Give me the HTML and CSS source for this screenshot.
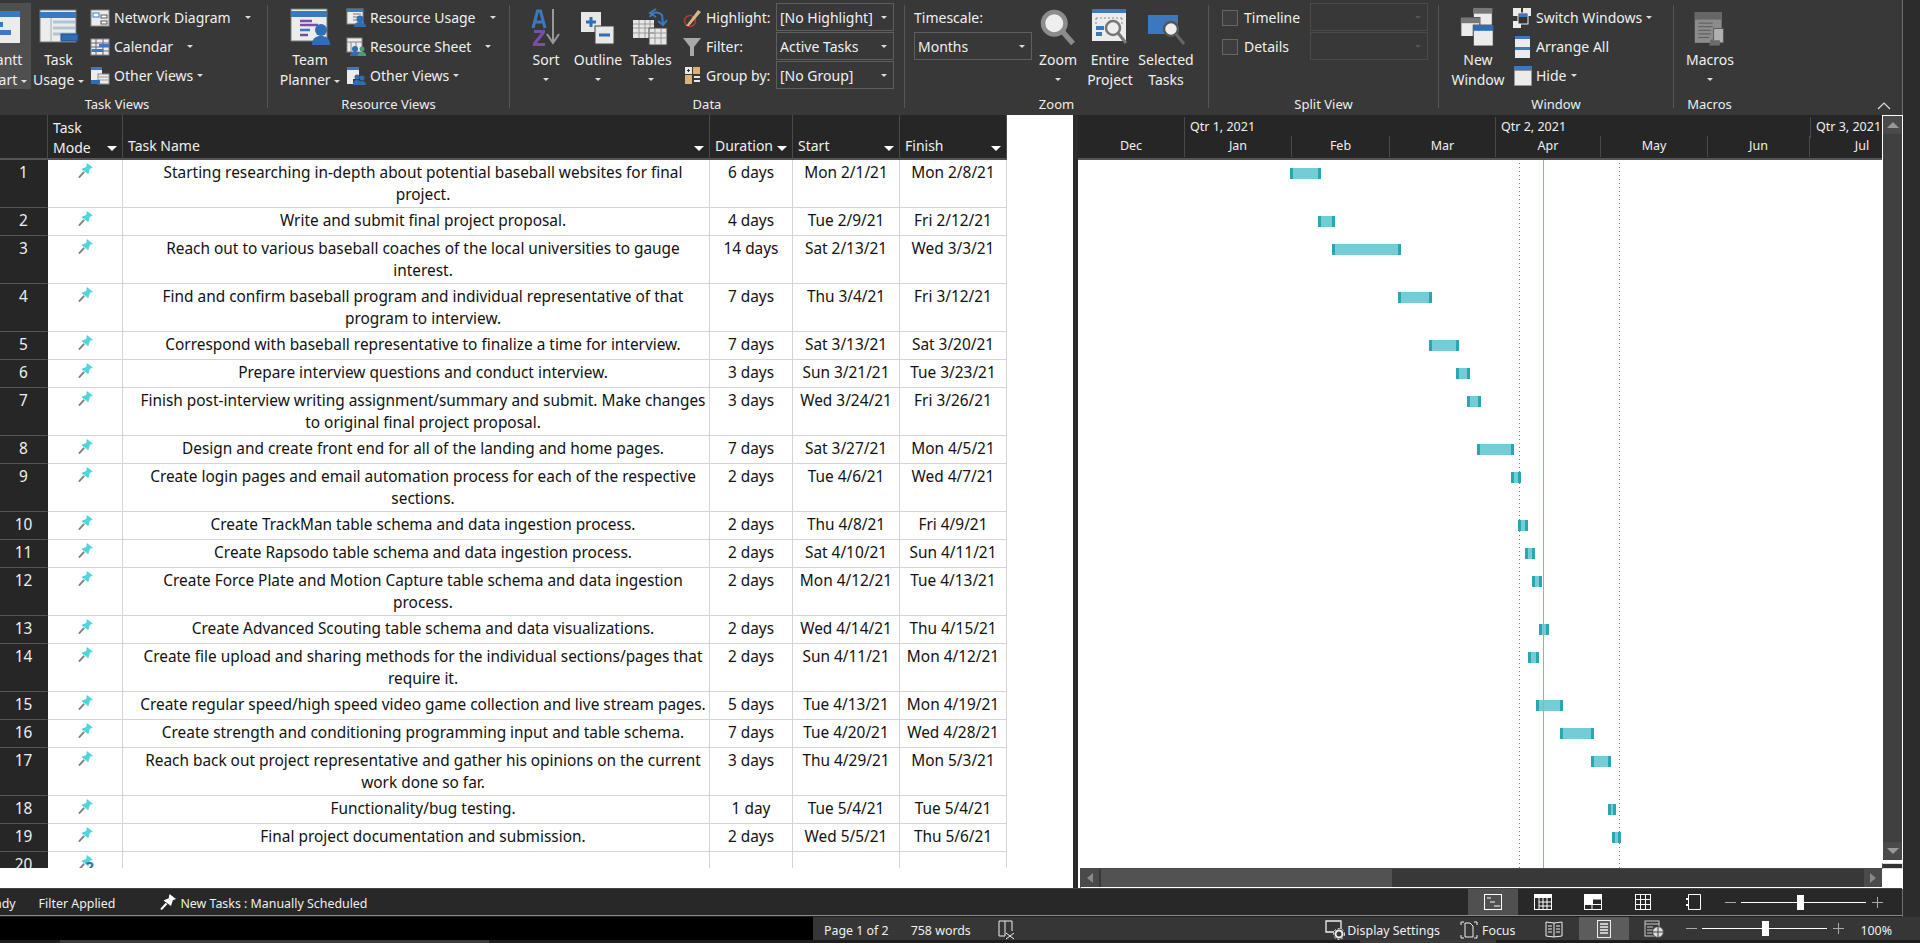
FILE: index.html
```html
<!DOCTYPE html>
<html lang="en">
<head>
<meta charset="utf-8">
<title>Project</title>
<link rel="stylesheet" href="styles.css">
</head>
<body>
<svg class="defs" width="0" height="0">
  <symbol id="pin" viewBox="0 0 16 16">
    <path d="M6.500 9.500 1 15.500" stroke="#7d7d7d" stroke-width="2" fill="none"/>
    <path d="M9.500 0l6.500 5-3.200 1.200-1.800 5.800-7.500-5.600 5.200-2.200z" fill="#4fd6dc"/>
  </symbol>
  <symbol id="pinw" viewBox="0 0 16 16">
    <path d="M6.500 9.500 1 15.500" stroke="#fff" stroke-width="2" fill="none"/>
    <path d="M9.500 0l6.500 5-3.200 1.200-1.800 5.800-7.500-5.600 5.200-2.200z" fill="#fff"/>
  </symbol>
  <symbol id="mag" viewBox="0 0 24 24">
    <circle cx="9.500" cy="9.500" r="7.500" fill="#eee" stroke="#8c8c8c" stroke-width="3"/>
    <path d="M15 15l7 8" stroke="#8c8c8c" stroke-width="3.500"/>
  </symbol>
</svg>
<div class="top">
<div class="project">
  <header class="ribbon">
    <section class="group g-task">
      <div class="body">
        <div class="big b-gantt active">
          <svg class="bigicon" width="32" height="34" viewBox="0 0 32 34"><rect x="0" y="1" width="32" height="32" fill="#ececec"/><rect y="1" width="32" height="6" fill="#3b78c2"/><rect x="3" y="12" width="12" height="5" fill="#3b78c2"/><rect x="11" y="20" width="12" height="5" fill="#3b78c2"/><path d="M1 9v22M9 9v22" stroke="#bbb"/></svg>
          <span class="lbl">Gantt</span><span class="lbl">Chart <i class="caret"></i></span>
        </div>
        <div class="big b-usage">
          <svg class="bigicon" width="40" height="36" viewBox="0 0 40 36"><rect x="1" y="1" width="36" height="32" fill="#ececec" stroke="#777"/><rect x="1" y="3" width="36" height="6" fill="#3b78c2"/><path d="M12 9v24" stroke="#aaa"/><path d="M14 13h22M14 19h22M14 25h22" stroke="#b4c4d2" stroke-width="3"/><rect x="22" y="25" width="17" height="7" fill="#2f6db5" stroke="#1e4d86"/></svg>
          <span class="lbl">Task</span><span class="lbl">Usage <i class="caret"></i></span>
        </div>
        <div class="smalls s-task">
          <div class="small"><svg width="20" height="18" viewBox="0 0 20 18"><rect x="1" y="1" width="18" height="16" fill="#ececec" stroke="#888"/><rect x="3" y="4" width="6" height="4" fill="#fff" stroke="#3b78c2"/><rect x="11" y="6" width="6" height="3" fill="#fff" stroke="#555"/><rect x="11" y="12" width="6" height="3" fill="#fff" stroke="#555"/></svg><span>Network Diagram</span><i class="caret c-far"></i></div>
          <div class="small"><svg width="20" height="18" viewBox="0 0 20 18"><rect x="1" y="1" width="18" height="16" fill="#ececec" stroke="#888"/><path d="M1 5h18M1 9h18M1 13h18M6 1v16M13 1v16" stroke="#666"/><rect x="9" y="6" width="10" height="3" fill="#3b78c2"/><rect x="2" y="11" width="11" height="3" fill="#3b78c2"/></svg><span>Calendar</span><i class="caret c-mid"></i></div>
          <div class="small"><svg width="20" height="20" viewBox="0 0 20 20"><rect x="1" y="1" width="11" height="13" fill="#ececec"/><rect x="1" y="1" width="11" height="3" fill="#3b78c2"/><rect x="8" y="8" width="11" height="10" fill="#ececec" stroke="#888"/><path d="M9 11h9M9 14h9" stroke="#999"/><rect x="1" y="14" width="9" height="4" fill="#2f6db5"/></svg><span>Other Views</span><i class="caret"></i></div>
        </div>
      </div>
      <div class="glabel">Task Views</div>
    </section>
    <div class="sep"></div>
    <section class="group g-res">
      <div class="body">
        <div class="big b-team">
          <svg class="bigicon" width="40" height="38" viewBox="0 0 40 38"><rect x="1" y="1" width="36" height="32" fill="#ececec" stroke="#777"/><rect x="1" y="3" width="36" height="6" fill="#3b78c2"/><path d="M10 13h12" stroke="#7a4ea8" stroke-width="2.500"/><path d="M10 17h18" stroke="#7a4ea8" stroke-width="2.500"/><path d="M10 22h10" stroke="#3b78c2" stroke-width="2.500"/><path d="M10 27h8" stroke="#7a4ea8" stroke-width="2.500"/><circle cx="31" cy="22" r="6" fill="#2f6db5"/><path d="M22 37c0-7 4-9 9-9s9 2 9 9z" fill="#2f6db5"/></svg>
          <span class="lbl">Team</span><span class="lbl">Planner <i class="caret"></i></span>
        </div>
        <div class="smalls s-res">
          <div class="small"><svg width="20" height="20" viewBox="0 0 20 20"><rect x="1" y="1" width="16" height="15" fill="#ececec" stroke="#888"/><rect x="1" y="1" width="16" height="3" fill="#3b78c2"/><path d="M7 6h8M7 9h6M7 12h5" stroke="#777"/><circle cx="14" cy="11" r="3.500" fill="#2f6db5"/><path d="M8 19c0-4 3-5 6-5s6 1 6 5z" fill="#2f6db5"/></svg><span>Resource Usage</span><i class="caret c-far2"></i></div>
          <div class="small"><svg width="20" height="20" viewBox="0 0 20 20"><rect x="1" y="1" width="15" height="14" fill="#ececec" stroke="#888"/><path d="M1 5h15M5 5v10M10 5v10" stroke="#888"/><circle cx="9" cy="12" r="3" fill="#2f6db5"/><path d="M4 19c0-3 2-4 5-4s5 1 5 4z" fill="#2f6db5"/><circle cx="16" cy="12" r="2.500" fill="#4f9a78"/><path d="M12 19c0-3 1-4 4-4s4 1 4 4z" fill="#4f9a78"/></svg><span>Resource Sheet</span><i class="caret c-mid2"></i></div>
          <div class="small"><svg width="20" height="20" viewBox="0 0 20 20"><rect x="1" y="1" width="12" height="12" fill="#ececec"/><rect x="1" y="1" width="12" height="3" fill="#3b78c2"/><rect x="1" y="13" width="6" height="5" fill="#ececec"/><circle cx="11" cy="11" r="2.500" fill="#2f6db5"/><path d="M7 19c0-3 1-5 4-5s4 2 4 5z" fill="#2f6db5"/><circle cx="16" cy="12" r="2.500" fill="#2f6db5"/><path d="M13 19c0-3 1-4 3-4s4 1 4 4z" fill="#2f6db5"/></svg><span>Other Views</span><i class="caret"></i></div>
        </div>
      </div>
      <div class="glabel">Resource Views</div>
    </section>
    <div class="sep"></div>
    <section class="group g-data">
      <div class="body">
        <div class="big b-sort">
          <svg class="bigicon" width="30" height="38" viewBox="0 0 30 38"><path d="M2 20 6.500 3h3L14 20M4 14h8" stroke="#3b78c2" stroke-width="3" fill="none"/><path d="M3 22h11v3L6 35h8v3H2v-3l8-10H3z" fill="#7a4ea8"/><path d="M22 1v32M16 26l6 9 6-9" stroke="#9a9a9a" stroke-width="2" fill="none"/></svg>
          <span class="lbl">Sort</span><i class="caret c-below"></i>
        </div>
        <div class="big b-outline">
          <svg class="bigicon" width="34" height="36" viewBox="0 0 34 36"><rect x="0" y="3" width="20" height="20" fill="#e8e8e8"/><path d="M5 13h10M10 8v10" stroke="#2f6db5" stroke-width="3"/><rect x="14" y="17" width="19" height="18" fill="#e8e8e8" stroke="#444"/><path d="M18 26h11" stroke="#2f6db5" stroke-width="3"/></svg>
          <span class="lbl">Outline</span><i class="caret c-below"></i>
        </div>
        <div class="big b-tables">
          <svg class="bigicon" width="38" height="38" viewBox="0 0 38 38"><rect x="1" y="12" width="21" height="18" fill="#e6e6e6"/><rect x="17" y="20" width="18" height="17" fill="#e6e6e6" stroke="#444"/><path d="M1 16h21M1 20h21M1 25h21M7 12v18M13 12v18M18 12v8M17 25h18M17 30h18M23 20v17M29 20v17" stroke="#888" stroke-width=".8"/><path d="M18 9c2-5 8-6 12-2l1 9M26 13l5 4 4-5M24 1l-6 4 6 4" stroke="#3b78c2" stroke-width="2" fill="none"/></svg>
          <span class="lbl">Tables</span><i class="caret c-below"></i>
        </div>
        <div class="smalls s-data">
          <div class="small"><svg width="20" height="20" viewBox="0 0 20 20"><circle cx="8" cy="13" r="5.500" fill="none" stroke="#b8392b" stroke-width="1.500"/><path d="M4 18 16 2l3 2L7 18z" fill="#d8b48c"/></svg><span>Highlight:</span></div>
          <div class="small"><svg width="20" height="20" viewBox="0 0 20 20"><path d="M1 1h18l-7 9v9h-4v-9z" fill="#a8a8a8"/></svg><span>Filter:</span></div>
          <div class="small"><svg width="20" height="20" viewBox="0 0 20 20"><rect x="3" y="1" width="7" height="7" fill="#e8e8e8"/><rect x="3" y="9" width="7" height="9" fill="#d8b278"/><rect x="11" y="1" width="7" height="7" fill="#d8b278"/><path d="M12 11h6M12 15h6" stroke="#e8e8e8" stroke-width="2"/><path d="M5 4.500h3M6.500 3v3" stroke="#333"/></svg><span>Group by:</span></div>
        </div>
        <div class="combos">
          <div class="combo"><span>[No Highlight]</span><i class="caret"></i></div>
          <div class="combo"><span>Active Tasks</span><i class="caret"></i></div>
          <div class="combo"><span>[No Group]</span><i class="caret"></i></div>
        </div>
      </div>
      <div class="glabel">Data</div>
    </section>
    <div class="sep"></div>
    <section class="group g-zoom">
      <div class="body">
        <div class="timescale">
          <div class="tlabel">Timescale:</div>
          <div class="combo"><span>Months</span><i class="caret"></i></div>
        </div>
        <div class="big b-zoom">
          <svg class="bigicon" width="36" height="36"><use href="#mag"/></svg>
          <span class="lbl">Zoom</span><i class="caret c-below"></i>
        </div>
        <div class="big b-entire">
          <svg class="bigicon" width="38" height="38" viewBox="0 0 38 38"><rect x="1" y="1" width="34" height="32" fill="#ececec"/><rect x="1" y="1" width="34" height="4" fill="#3b78c2"/><path d="M5 10v6M31 10v6M5 10h26" stroke="#888" stroke-dasharray="2 2"/><rect x="5" y="18" width="8" height="4" fill="#3b78c2"/><rect x="5" y="24" width="6" height="4" fill="#3b78c2"/><circle cx="22" cy="20" r="7" fill="#eee" stroke="#777" stroke-width="2.500"/><path d="M27 25l8 10" stroke="#777" stroke-width="3"/></svg>
          <span class="lbl">Entire</span><span class="lbl">Project</span>
        </div>
        <div class="big b-selected">
          <svg class="bigicon" width="40" height="38" viewBox="0 0 40 38"><rect x="2" y="7" width="30" height="19" fill="#3b78c2"/><circle cx="25" cy="21" r="7" fill="#eee" stroke="#555" stroke-width="2.500"/><path d="M30 26l8 10" stroke="#666" stroke-width="3"/></svg>
          <span class="lbl">Selected</span><span class="lbl">Tasks</span>
        </div>
      </div>
      <div class="glabel">Zoom</div>
    </section>
    <div class="sep"></div>
    <section class="group g-split">
      <div class="body">
        <div class="smalls s-split">
          <div class="small"><i class="check"></i><span>Timeline</span></div>
          <div class="small"><i class="check"></i><span>Details</span></div>
        </div>
        <div class="combos">
          <div class="combo dim"><span></span><i class="caret"></i></div>
          <div class="combo dim"><span></span><i class="caret"></i></div>
        </div>
      </div>
      <div class="glabel">Split View</div>
    </section>
    <div class="sep"></div>
    <section class="group g-window">
      <div class="body">
        <div class="big b-new">
          <svg class="bigicon" width="38" height="42" viewBox="0 0 38 42"><rect x="14" y="1" width="20" height="22" fill="#ececec" stroke="#333"/><rect x="14" y="1" width="20" height="6" fill="#777"/><rect x="1" y="11" width="20" height="20" fill="#ececec" stroke="#333"/><rect x="1" y="11" width="20" height="6" fill="#777"/><rect x="14" y="19" width="21" height="22" fill="#ececec" stroke="#333"/><rect x="14" y="19" width="21" height="6" fill="#2f6db5"/></svg>
          <span class="lbl">New</span><span class="lbl">Window</span>
        </div>
        <div class="smalls s-window">
          <div class="small"><svg width="20" height="22" viewBox="0 0 20 22"><rect x="1" y="1" width="8" height="8" fill="#ececec"/><rect x="11" y="1" width="8" height="8" fill="#ececec"/><rect x="1" y="14" width="8" height="7" fill="#ececec"/><rect x="6" y="6" width="10" height="11" fill="#333" stroke="#ececec"/><rect x="7" y="7" width="8" height="3" fill="#3b78c2"/></svg><span>Switch Windows</span><i class="caret"></i></div>
          <div class="small"><svg width="20" height="22" viewBox="0 0 20 22"><rect x="3" y="0" width="15" height="11" fill="#ececec"/><rect x="3" y="0" width="15" height="3" fill="#3b78c2"/><rect x="3" y="11" width="15" height="11" fill="#ececec"/><rect x="3" y="11" width="15" height="3" fill="#3b78c2"/></svg><span>Arrange All</span></div>
          <div class="small"><svg width="20" height="22" viewBox="0 0 20 22"><rect x="2" y="1" width="18" height="4" fill="#3b78c2"/><rect x="2.500" y="5.500" width="17" height="15" fill="#ececec" stroke="#999" stroke-dasharray="1 1"/></svg><span>Hide</span><i class="caret"></i></div>
        </div>
      </div>
      <div class="glabel">Window</div>
    </section>
    <div class="sep"></div>
    <section class="group g-macros">
      <div class="body">
        <div class="big b-macros">
          <svg class="bigicon" width="36" height="48" viewBox="0 0 36 48"><rect x="1" y="6" width="30" height="34" fill="#8c8c8c"/><rect x="1" y="6" width="30" height="8" fill="#666"/><path d="M5 18h16M5 22h16M5 26h14M5 30h14M5 34h12" stroke="#555"/><path d="M22 24h11v16H19v-3h3z" fill="#b0b0b0" stroke="#555"/><path d="M19 37h10v6H17z" fill="#6c6c6c"/></svg>
          <span class="lbl">Macros</span><i class="caret c-below"></i>
        </div>
      </div>
      <div class="glabel">Macros</div>
    </section>
    <svg class="collapse" width="14" height="8" viewBox="0 0 14 8"><path d="M1 7l6-6 6 6" stroke="#ddd" fill="none" stroke-width="1.200"/></svg>
  </header>

  <main class="main">
    <div class="leftpane">
      <div class="tablewrap">
        <table class="sheet">
          <colgroup><col class="c0"><col class="c1"><col class="c2"><col class="c3"><col class="c4"><col class="c5"></colgroup>
          <thead>
            <tr>
              <th></th>
              <th class="th-mode"><div class="th"><span>Task<br>Mode</span><i class="tri"></i></div></th>
              <th><div class="th"><span>Task Name</span><i class="tri"></i></div></th>
              <th><div class="th"><span>Duration</span><i class="tri tri-tight"></i></div></th>
              <th><div class="th"><span>Start</span><i class="tri"></i></div></th>
              <th><div class="th"><span>Finish</span><i class="tri"></i></div></th>
            </tr>
          </thead>
          <tbody>
            <tr class="two"><td class="num">1</td><td class="mode"><svg width="15" height="15"><use href="#pin"/></svg></td><td class="name">Starting researching in-depth about potential baseball websites for final<br>project.</td><td>6 days</td><td>Mon 2/1/21</td><td>Mon 2/8/21</td></tr>
            <tr class="one"><td class="num">2</td><td class="mode"><svg width="15" height="15"><use href="#pin"/></svg></td><td class="name">Write and submit final project proposal.</td><td>4 days</td><td>Tue 2/9/21</td><td>Fri 2/12/21</td></tr>
            <tr class="two"><td class="num">3</td><td class="mode"><svg width="15" height="15"><use href="#pin"/></svg></td><td class="name">Reach out to various baseball coaches of the local universities to gauge<br>interest.</td><td>14 days</td><td>Sat 2/13/21</td><td>Wed 3/3/21</td></tr>
            <tr class="two"><td class="num">4</td><td class="mode"><svg width="15" height="15"><use href="#pin"/></svg></td><td class="name">Find and confirm baseball program and individual representative of that<br>program to interview.</td><td>7 days</td><td>Thu 3/4/21</td><td>Fri 3/12/21</td></tr>
            <tr class="one"><td class="num">5</td><td class="mode"><svg width="15" height="15"><use href="#pin"/></svg></td><td class="name">Correspond with baseball representative to finalize a time for interview.</td><td>7 days</td><td>Sat 3/13/21</td><td>Sat 3/20/21</td></tr>
            <tr class="one"><td class="num">6</td><td class="mode"><svg width="15" height="15"><use href="#pin"/></svg></td><td class="name">Prepare interview questions and conduct interview.</td><td>3 days</td><td>Sun 3/21/21</td><td>Tue 3/23/21</td></tr>
            <tr class="two"><td class="num">7</td><td class="mode"><svg width="15" height="15"><use href="#pin"/></svg></td><td class="name">Finish post-interview writing assignment/summary and submit. Make changes<br>to original final project proposal.</td><td>3 days</td><td>Wed 3/24/21</td><td>Fri 3/26/21</td></tr>
            <tr class="one"><td class="num">8</td><td class="mode"><svg width="15" height="15"><use href="#pin"/></svg></td><td class="name">Design and create front end for all of the landing and home pages.</td><td>7 days</td><td>Sat 3/27/21</td><td>Mon 4/5/21</td></tr>
            <tr class="two"><td class="num">9</td><td class="mode"><svg width="15" height="15"><use href="#pin"/></svg></td><td class="name">Create login pages and email automation process for each of the respective<br>sections.</td><td>2 days</td><td>Tue 4/6/21</td><td>Wed 4/7/21</td></tr>
            <tr class="one"><td class="num">10</td><td class="mode"><svg width="15" height="15"><use href="#pin"/></svg></td><td class="name">Create TrackMan table schema and data ingestion process.</td><td>2 days</td><td>Thu 4/8/21</td><td>Fri 4/9/21</td></tr>
            <tr class="one"><td class="num">11</td><td class="mode"><svg width="15" height="15"><use href="#pin"/></svg></td><td class="name">Create Rapsodo table schema and data ingestion process.</td><td>2 days</td><td>Sat 4/10/21</td><td>Sun 4/11/21</td></tr>
            <tr class="two"><td class="num">12</td><td class="mode"><svg width="15" height="15"><use href="#pin"/></svg></td><td class="name">Create Force Plate and Motion Capture table schema and data ingestion<br>process.</td><td>2 days</td><td>Mon 4/12/21</td><td>Tue 4/13/21</td></tr>
            <tr class="one"><td class="num">13</td><td class="mode"><svg width="15" height="15"><use href="#pin"/></svg></td><td class="name">Create Advanced Scouting table schema and data visualizations.</td><td>2 days</td><td>Wed 4/14/21</td><td>Thu 4/15/21</td></tr>
            <tr class="two"><td class="num">14</td><td class="mode"><svg width="15" height="15"><use href="#pin"/></svg></td><td class="name">Create file upload and sharing methods for the individual sections/pages that<br>require it.</td><td>2 days</td><td>Sun 4/11/21</td><td>Mon 4/12/21</td></tr>
            <tr class="one"><td class="num">15</td><td class="mode"><svg width="15" height="15"><use href="#pin"/></svg></td><td class="name">Create regular speed/high speed video game collection and live stream pages.</td><td>5 days</td><td>Tue 4/13/21</td><td>Mon 4/19/21</td></tr>
            <tr class="one"><td class="num">16</td><td class="mode"><svg width="15" height="15"><use href="#pin"/></svg></td><td class="name">Create strength and conditioning programming input and table schema.</td><td>7 days</td><td>Tue 4/20/21</td><td>Wed 4/28/21</td></tr>
            <tr class="two"><td class="num">17</td><td class="mode"><svg width="15" height="15"><use href="#pin"/></svg></td><td class="name">Reach back out project representative and gather his opinions on the current<br>work done so far.</td><td>3 days</td><td>Thu 4/29/21</td><td>Mon 5/3/21</td></tr>
            <tr class="one"><td class="num">18</td><td class="mode"><svg width="15" height="15"><use href="#pin"/></svg></td><td class="name">Functionality/bug testing.</td><td>1 day</td><td>Tue 5/4/21</td><td>Tue 5/4/21</td></tr>
            <tr class="one"><td class="num">19</td><td class="mode"><svg width="15" height="15"><use href="#pin"/></svg></td><td class="name">Final project documentation and submission.</td><td>2 days</td><td>Wed 5/5/21</td><td>Thu 5/6/21</td></tr>
            <tr class="one"><td class="num">20</td><td class="mode"><svg width="15" height="15"><use href="#pin"/></svg><b class="q">?</b></td><td class="name"></td><td></td><td></td><td></td></tr>
          </tbody>
        </table>
      </div>
    </div>
    <div class="divider"></div>
    <div class="gantt">
      <div class="ganttcol">
        <div class="scale">
          <div class="qtrs">
            <div class="qc q-dec"></div>
            <div class="qc q-1">Qtr 1, 2021</div>
            <div class="qc q-2">Qtr 2, 2021</div>
            <div class="qc q-3">Qtr 3, 2021</div>
          </div>
          <div class="months">
            <div class="m m-dec">Dec</div>
            <div class="m m-jan">Jan</div>
            <div class="m m-feb">Feb</div>
            <div class="m m-mar">Mar</div>
            <div class="m m-apr">Apr</div>
            <div class="m m-may">May</div>
            <div class="m m-jun">Jun</div>
            <div class="m m-jul">Jul</div>
          </div>
        </div>
        <div class="canvas">
          <div class="bar" style="top:8px;left:212px;width:31px"></div>
          <div class="bar" style="top:56px;left:240px;width:17px"></div>
          <div class="bar" style="top:84px;left:254px;width:69px"></div>
          <div class="bar" style="top:132px;left:320px;width:34px"></div>
          <div class="bar" style="top:180px;left:351px;width:30px"></div>
          <div class="bar" style="top:208px;left:378px;width:14px"></div>
          <div class="bar" style="top:236px;left:389px;width:14px"></div>
          <div class="bar" style="top:284px;left:399px;width:37px"></div>
          <div class="bar" style="top:312px;left:433px;width:10px"></div>
          <div class="bar" style="top:360px;left:440px;width:10px"></div>
          <div class="bar" style="top:388px;left:447px;width:10px"></div>
          <div class="bar" style="top:416px;left:454px;width:10px"></div>
          <div class="bar" style="top:464px;left:461px;width:10px"></div>
          <div class="bar" style="top:492px;left:450px;width:11px"></div>
          <div class="bar" style="top:540px;left:458px;width:27px"></div>
          <div class="bar" style="top:568px;left:482px;width:34px"></div>
          <div class="bar" style="top:596px;left:513px;width:20px"></div>
          <div class="bar" style="top:644px;left:530px;width:8px"></div>
          <div class="bar" style="top:672px;left:534px;width:9px"></div>
          <div class="dots d1"></div>
          <div class="dots d2"></div>
          <div class="today"></div>
        </div>
        <div class="hscroll">
          <div class="hbtn"><i class="tri-l"></i></div>
          <div class="hthumb"></div>
          <div class="hbtn hbtn-r"><i class="tri-r"></i></div>
        </div>
      </div>
      <div class="vcol">
        <div class="vscroll">
          <div class="vbtn"><i class="tri-u"></i></div>
          <div class="vtrack"></div>
          <div class="vbtn"><i class="tri-d"></i></div>
        </div>
        <div class="vgrip"></div>
      </div>
    </div>
  </main>

  <div class="pstatus">
    <span class="pready">Ready</span>
    <span class="pfilter">Filter Applied</span>
    <svg class="ppin" width="16" height="16"><use href="#pinw"/></svg>
    <span>New Tasks : Manually Scheduled</span>
    <div class="views">
      <div class="vw on"><svg width="18" height="16" viewBox="0 0 18 16"><rect x=".5" y=".5" width="17" height="15" fill="none" stroke="#fff"/><path d="M3 4h4M6 8h5M10 12h6" stroke="#fff"/></svg></div>
      <div class="vw"><svg width="18" height="16" viewBox="0 0 18 16"><rect x=".5" y=".5" width="17" height="15" fill="none" stroke="#fff"/><rect width="18" height="4" fill="#fff"/><path d="M5 4v12M9 4v12M13 4v12M5 8h13M5 12h13" stroke="#fff"/></svg></div>
      <div class="vw"><svg width="18" height="16" viewBox="0 0 18 16"><rect x=".5" y=".5" width="17" height="15" fill="none" stroke="#fff"/><rect width="9" height="5" x="0" fill="#fff"/><rect x="9" y="0" width="9" height="5" fill="#fff"/><rect x="0" y="5" width="9" height="5" fill="#fff"/><path d="M0 10.500h18M8 10v6M9 5h9" stroke="#fff"/></svg></div>
      <div class="vw"><svg width="16" height="16" viewBox="0 0 16 16"><rect x=".5" y=".5" width="15" height="15" fill="none" stroke="#fff"/><path d="M5.500 0v16M10.500 0v16M0 5.500h16M0 10.500h16" stroke="#fff"/></svg></div>
      <div class="vw"><svg width="16" height="16" viewBox="0 0 16 16"><path d="M3.500.5h12v15h-12zM1 5h3M1 11h3" fill="none" stroke="#fff" stroke-width="1"/><path d="M1 4h3v2H1zM1 10h3v2H1z" fill="#fff"/></svg></div>
    </div>
    <div class="zoomctl zc-project"><span class="zs"></span><span class="zline"><i class="zthumb"></i></span><span class="zp"></span></div>
  </div>
</div>
<div class="strip"></div>
</div>

<footer class="wordbar">
  <div class="wblack"></div>
  <div class="wright">
    <span class="w-page">Page 1 of 2</span>
    <span class="w-words">758 words</span>
    <svg class="w-proof" width="17" height="20" viewBox="0 0 17 20"><path d="M1 1h6v15H1zM7 1h7v10M8 13l8 6M16 13l-8 6" stroke="#eee" fill="none"/></svg>
    <svg class="w-disp" width="20" height="20" viewBox="0 0 20 20"><path d="M9 12H1V1h15v8" stroke="#eee" fill="none" stroke-width="1.300"/><circle cx="14" cy="14" r="3.500" fill="none" stroke="#eee" stroke-width="2"/><circle cx="14" cy="14" r="5.500" fill="none" stroke="#eee" stroke-dasharray="2 2"/></svg>
    <span>Display Settings</span>
    <svg class="w-focus" width="18" height="20" viewBox="0 0 18 20"><path d="M1 5V2h3M17 5V2h-3M1 15v3h3M17 15v3h-3M5 3h5l3 3v11H5z" stroke="#eee" fill="none"/></svg>
    <span>Focus</span>
    <div class="w-views">
      <div class="wv"><svg width="18" height="18" viewBox="0 0 18 18"><path d="M1 2l8 1 8-1v14l-8 1-8-1zM9 3v14M3 6h4M3 9h4M3 12h4M11 6h4M11 9h4M11 12h4" stroke="#eee" fill="none"/></svg></div>
      <div class="wv on"><svg width="14" height="18" viewBox="0 0 14 18"><rect x=".5" y=".5" width="13" height="17" fill="none" stroke="#eee"/><path d="M3 4h8M3 7h8M3 10h8M3 13h8" stroke="#eee" stroke-width="1.500"/></svg></div>
      <div class="wv"><svg width="20" height="18" viewBox="0 0 20 18"><rect x="1" y="1" width="14" height="15" fill="none" stroke="#ccc"/><path d="M1 4h14M3 7h6M3 10h6M3 13h5" stroke="#ccc"/><circle cx="14" cy="12" r="5.500" fill="#ddd" stroke="#444"/><path d="M8.500 12h11M14 6.500v11" stroke="#444"/></svg></div>
    </div>
    <div class="zoomctl zc-word"><span class="zs"></span><span class="zline"><i class="zthumb"></i></span><span class="zp"></span></div>
    <span class="w-pct">100%</span>
  </div>
</footer>
<div class="taskstrip"><div class="ts-a"></div><div class="ts-b"></div></div>
</body>
</html>
```
FILE: styles.css
```css
* { box-sizing: border-box; }
html, body { margin: 0; height: 943px; overflow: hidden; }
body { width: 1920px; background: #1e1e1e; color: #f0f0f0; font-family: "Noto Sans", "Open Sans", sans-serif; font-size: 14px; }
.defs { display: block; height: 0; }
.top { display: flex; height: 917px; }
.strip { flex: 1; background: #2c2c2c; }
.project { width: 1903px; height: 917px; display: flex; flex-direction: column; border-right: 1px solid #6e6e6e; }

/* ribbon */
.ribbon { height: 115px; flex: none; display: flex; margin-left: -33px; background: #383838; overflow: hidden; position: relative; }
.group { flex: none; height: 115px; padding-top: 3px; display: flex; flex-direction: column; }
.body { flex: none; height: 89px; display: flex; }
.glabel { text-align: center; font-size: 13px; line-height: 24px; color: #eee; }
.sep { flex: none; width: 1px; margin: 5px 0 7px; background: #555; }
.g-task { width: 300px; }
.g-res { width: 241px; }
.g-data { width: 394px; }
.g-zoom { width: 303px; }
.g-split { width: 229px; }
.g-window { width: 234px; }
.g-macros { width: 71px; }
.big { flex: none; height: 86px; display: flex; flex-direction: column; align-items: center; text-align: center; padding-top: 4px; position: relative; }
.bigicon { flex: none; height: 40px; margin-bottom: 3px; }
.lbl { line-height: 20px; white-space: nowrap; }
.active { background: #4f4f4f; }
.b-gantt { width: 54px; margin-left: 10px; }
.b-usage { width: 51px; margin-left: 2px; }
.b-team { width: 60px; margin-left: 12px; }
.b-sort { width: 40px; margin-left: 16px; }
.b-outline { width: 50px; margin-left: 7px; }
.b-tables { width: 50px; margin-left: 3px; }
.b-zoom { width: 44px; margin-left: 4px; }
.b-entire { width: 52px; margin-left: 4px; }
.b-selected { width: 56px; margin-left: 2px; }
.b-new { width: 56px; margin-left: 11px; }
.b-macros { width: 60px; margin-left: 6px; }
.smalls { flex: none; display: flex; flex-direction: column; }
.small { height: 29px; display: flex; align-items: center; gap: 4px; white-space: nowrap; }
.s-task { margin-left: 6px; }
.s-res { margin-left: 6px; }
.s-data { margin-left: 6px; width: 94px; }
.s-split { margin-left: 13px; width: 88px; }
.s-window { margin-left: 6px; }
.caret { display: inline-block; width: 0; height: 0; border: 3px solid transparent; border-top: 3px solid #ddd; border-bottom: 0; vertical-align: middle; flex: none; }
.c-far { margin-left: 10px; }
.c-mid { margin-left: 10px; }
.c-far2 { margin-left: 10px; }
.c-mid2 { margin-left: 10px; }
.c-below { margin-top: 8px; }
.combos { flex: none; width: 118px; display: flex; flex-direction: column; }
.combo { height: 28px; margin-bottom: 1px; width: 118px; border: 1px solid #5e5e5e; display: flex; align-items: center; justify-content: space-between; padding: 0 6px 0 3px; white-space: nowrap; }
.combo.dim { border-color: #4a4a4a; }
.combo.dim .caret { border-top-color: #555; }
.timescale { margin-left: 9px; width: 118px; flex: none; }
.tlabel { height: 29px; line-height: 29px; }
.check { width: 16px; height: 16px; border: 1px solid #666; background: #3e3e3e; margin-right: 2px; flex: none; }
.b-macros .bigicon { height: 43px; margin-bottom: 0; }
.collapse { position: absolute; right: 11px; bottom: 5px; }

/* main */
.main { height: 774px; flex: none; display: flex; background: #fff; }
.leftpane { width: 1073px; flex: none; background: #fff; }
.tablewrap { width: 1007px; height: 753px; overflow: hidden; }
.sheet { border-collapse: separate; border-spacing: 0; table-layout: fixed; width: 1007px; color: #111; font-size: 15.4px; }
.c0 { width: 48px; } .c1 { width: 75px; } .c2 { width: 587px; } .c3 { width: 83px; } .c4 { width: 107px; } .c5 { width: 107px; }
.sheet th { height: 45px; padding: 0 5px 2px; background: #262626; color: #f0f0f0; font-size: 14px; font-weight: 400; border-right: 1px solid #4a4a4a; border-bottom: 2px solid #555; vertical-align: bottom; text-align: left; line-height: 20px; white-space: nowrap; }
.sheet th.th-mode { padding-bottom: 0; }
.th { display: flex; justify-content: space-between; align-items: flex-end; }
.tri { flex: none; width: 0; height: 0; border: 5px solid transparent; border-top: 5px solid #fff; border-bottom: 0; margin-bottom: 5px; }
.th-mode .tri { margin-bottom: 7px; }
.tri-tight { margin-left: 3px; }
.sheet td { padding: 2px 0 0; text-align: center; vertical-align: top; line-height: 22px; border-right: 1px solid #d4d4d4; border-bottom: 1px solid #d4d4d4; white-space: nowrap; }
.sheet td.name { padding-left: 14px; }
.sheet td.num { background: #262626; color: #f0f0f0; border-right-color: #262626; border-bottom-color: #555; }
.sheet td.mode { position: relative; padding-top: 3px; }
.one { height: 28px; } .two { height: 48px; }
.mode svg { display: block; margin: 0 auto; }
.q { position: absolute; left: 38px; top: 8px; color: #3b6fb5; font-size: 16px; line-height: 16px; font-weight: 700; }
.divider { flex: none; width: 5px; background: #2b2b2b; }

/* gantt */
.gantt { flex: 1; display: flex; min-width: 0; }
.ganttcol { width: 804px; flex: none; display: flex; flex-direction: column; }
.scale { height: 45px; flex: none; background: #262626; border-bottom: 2px solid #555; font-size: 12.5px; color: #f0f0f0; overflow: hidden; }
.qtrs { height: 23px; display: flex; padding-top: 2px; }
.months { height: 21px; display: flex; margin-top: -2px; }
.qc { flex: none; padding-left: 5px; line-height: 19px; border-left: 1px solid #4a4a4a; white-space: nowrap; }
.q-dec { width: 106px; border-left: 0; }
.q-1 { width: 311px; }
.q-2 { width: 315px; }
.q-3 { width: 100px; }
.m { flex: none; text-align: center; line-height: 20px; border-left: 1px solid #4a4a4a; }
.m-dec { width: 106px; border-left: 0; } .m-jan { width: 107px; } .m-feb { width: 98px; } .m-mar { width: 106px; } .m-apr { width: 105px; } .m-may { width: 107px; } .m-jun { width: 102px; } .m-jul { width: 105px; }
.canvas { position: relative; flex: none; height: 708px; background: #fff; overflow: hidden; }
.bar { position: absolute; height: 11px; background: #74cdd6; border-left: 3px solid #2aa6b0; border-right: 3px solid #2aa6b0; }
.dots { position: absolute; top: 3px; bottom: 0; width: 1px; background: repeating-linear-gradient(to bottom, #777 0 1px, transparent 1px 4px); }
.d1 { left: 441px; } .d2 { left: 541px; }
.today { position: absolute; top: 0; bottom: 0; left: 465px; width: 1px; background: #8fbc8f; }
.hscroll { height: 21px; flex: none; margin-left: 2px; display: flex; background: #383838; border: 1px solid #4a4a4a; border-bottom: 2px solid #fff; border-right: 0; }
.hbtn { width: 18px; flex: none; background: #4a4a4a; display: flex; align-items: center; justify-content: center; }
.hbtn-r { margin-left: auto; }
.hthumb { width: 291px; margin-left: 2px; background: #525252; }
.tri-l, .tri-r { width: 0; height: 0; border: 5px solid transparent; }
.tri-l { border-right: 6px solid #888; border-left: 0; }
.tri-r { border-left: 6px solid #888; border-right: 0; }
.vcol { width: 21px; flex: none; background: #fff; }
.vscroll { height: 747px; background: #3f3f3f; border: 1px solid #fff; border-bottom: 2px solid #fff; display: flex; flex-direction: column; }
.vbtn { height: 18px; flex: none; background: #4a4a4a; display: flex; align-items: center; justify-content: center; }
.vtrack { flex: 1; margin: 2px 0; background: #404040; }
.tri-u, .tri-d { width: 0; height: 0; border: 6px solid transparent; }
.tri-u { border-bottom: 6px solid #999; border-top: 0; }
.tri-d { border-top: 6px solid #999; border-bottom: 0; }
.vgrip { height: 6px; margin-top: 1px; background: #333; border: 1px solid #ddd; border-left-color: #444; }

/* project status */
.pstatus { height: 28px; flex: none; display: flex; align-items: center; background: #282828; border-bottom: 1px solid #8a8a8a; border-top: 1px solid #444; font-size: 12.4px; white-space: nowrap; margin-top: -1px; overflow: hidden; }
.pstatus > span { padding-top: 2px; }
.pready { margin-left: -20px; }
.pfilter { margin-left: 23px; }
.ppin { margin-left: 45px; margin-right: 4px; }
.views { margin-left: auto; display: flex; align-self: stretch; }
.vw { width: 50px; display: flex; align-items: center; justify-content: center; }
.vw.on { background: #505050; }
.zoomctl { display: flex; align-items: center; flex: none; }
.zc-project { margin-left: 7px; margin-right: 19px; }
.zs { width: 11px; height: 1px; background: #aaa; }
.zline { position: relative; width: 125px; height: 1px; margin: 0 6px 0 5px; background: #fff; display: block; }
.zthumb { position: absolute; left: 56px; top: -7px; width: 7px; height: 15px; background: #fff; }
.zc-word .zthumb { left: 60px; }
.zp { width: 11px; height: 11px; background: linear-gradient(#aaa, #aaa) center/11px 1px no-repeat, linear-gradient(#aaa, #aaa) center/1px 11px no-repeat; }

/* word bar */
.wordbar { height: 23px; display: flex; font-size: 12.4px; white-space: nowrap; }
.wblack { width: 813px; flex: none; background: #000; }
.wright { flex: 1; background: #363636; display: flex; align-items: center; padding-right: 28px; }
.wright > span { padding-top: 3px; }
.wright > svg { margin-top: 3px; }
.w-page { margin-left: 11px; }
.w-words { margin-left: 22px; }
.w-proof { margin-left: 27px; }
.w-disp { margin-left: auto; margin-right: 2px; }
.w-focus { margin-left: 20px; margin-right: 4px; }
.w-views { display: flex; align-self: stretch; margin-left: 14px; }
.wv { width: 50px; display: flex; align-items: center; justify-content: center; }
.wv.on { background: #5c5c5c; }
.zc-word { margin-left: 7px; }
.w-pct { margin-left: 16px; }
.taskstrip { height: 3px; display: flex; }
.ts-a { width: 429px; margin-left: 60px; background: #3a3a3a; }
.ts-b { width: 136px; margin-left: 871px; background: #3a3a3a; }
```
